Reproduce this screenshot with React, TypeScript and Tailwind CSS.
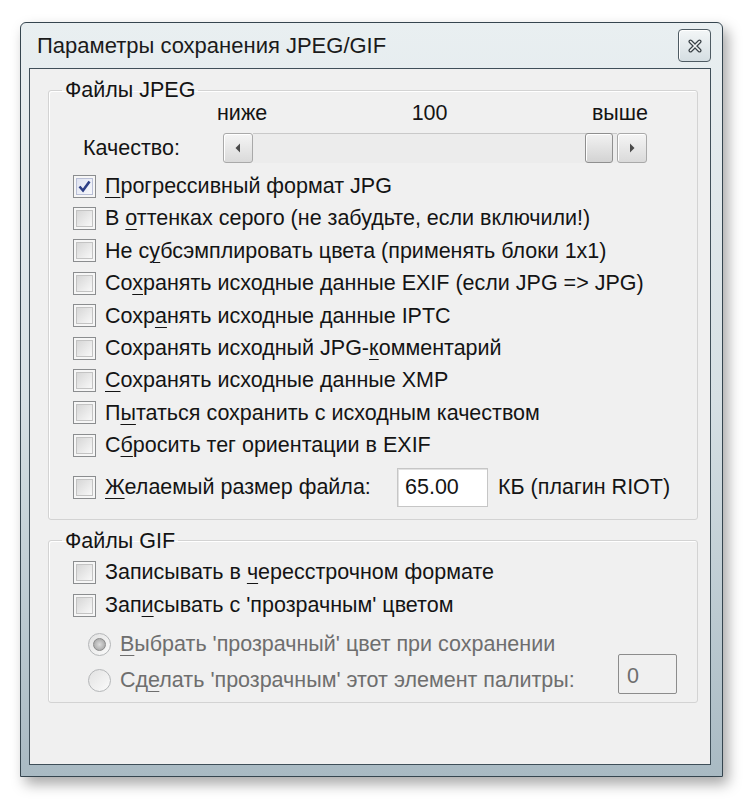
import type { ReactNode } from "react";

const sans = "font-['Liberation_Sans',Arial,sans-serif]";

// "&" marks the accelerator letter, like a Windows resource string
function Accel({ text }: { text: string }) {
  const i = text.indexOf("&");
  if (i < 0) return <>{text}</>;
  return (
    <>
      {text.slice(0, i)}
      <span className="underline decoration-1 underline-offset-[4px]">{text[i + 1]}</span>
      {text.slice(i + 2)}
    </>
  );
}

function CheckBox({ checked }: { checked?: boolean }) {
  return (
    <span className="flex h-[23px] w-[23px] shrink-0 items-center justify-center border border-[#8b8d8f] bg-[#f6f6f6]">
      {checked ? (
        <span className="flex h-[17px] w-[17px] items-center justify-center border border-[#b9bfd6] bg-linear-to-br from-[#dfe3f1] to-[#f7f8fc]">
          <svg width="15" height="15" viewBox="0 0 15 15">
            <path d="M2.5 7.5 L6 11.5 L12.5 2.5" fill="none" stroke="#2d3f86" strokeWidth="2.6" />
          </svg>
        </span>
      ) : (
        <span className="h-[17px] w-[17px] border border-[#c3c3c3] bg-linear-to-br from-[#d7d7d7] to-[#f8f8f8]" />
      )}
    </span>
  );
}

function Radio({ selected }: { selected?: boolean }) {
  return (
    <span className="flex h-[23px] w-[23px] shrink-0 items-center justify-center rounded-full border border-[#b4b6b8] bg-linear-to-br from-[#e2e2e2] to-[#fbfbfb]">
      {selected ? (
        <span className="h-[13px] w-[13px] rounded-full border border-[#8a8a8a] bg-radial from-[#dcdcdc] to-[#9c9c9c]" />
      ) : null}
    </span>
  );
}

function Option({ label, checked }: { label: string; checked?: boolean }) {
  return (
    <div className="flex h-[32.4px] items-center gap-[9px]">
      <CheckBox checked={checked} />
      <span className="whitespace-nowrap">
        <Accel text={label} />
      </span>
    </div>
  );
}

function GroupBox({ title, children }: { title: string; children: ReactNode }) {
  return (
    <fieldset className="ml-[18px] w-[650px] rounded-[3px] border border-[#d3d3d3] shadow-[inset_1px_1px_0_#ffffff]">
      <legend className="ml-[13px] px-[3px] leading-[24px]">{title}</legend>
      {children}
    </fieldset>
  );
}

function ScrollButton({ dir }: { dir: "left" | "right" }) {
  return (
    <span className="flex h-[30px] w-[30px] shrink-0 items-center justify-center rounded-[3px] border border-[#a9a9a9] bg-linear-to-b from-[#f5f5f5] to-[#dadada] shadow-[inset_1px_1px_0_#ffffff]">
      <svg width="8" height="12" viewBox="0 0 8 12">
        {dir === "left" ? (
          <path d="M6 1.5 L1.5 6 L6 10.5 Z" fill="#4a4a4a" />
        ) : (
          <path d="M2 1.5 L6.5 6 L2 10.5 Z" fill="#4a4a4a" />
        )}
      </svg>
    </span>
  );
}

const jpegOptions = [
  { label: "&Прогрессивный формат JPG", checked: true },
  { label: "В &оттенках серого (не забудьте, если включили!)" },
  { label: "Не с&убсэмплировать цвета (применять блоки 1x1)" },
  { label: "Со&хранять исходные данные EXIF (если JPG => JPG)" },
  { label: "Сохр&анять исходные данные IPTC" },
  { label: "Сохранять исходный JPG-&комментарий" },
  { label: "&Сохранять исходные данные XMP" },
  { label: "П&ытаться сохранить с исходным качеством" },
  { label: "С&бросить тег ориентации в EXIF" },
];

export default function App() {
  return (
    <div className={`h-[800px] w-[746px] overflow-hidden bg-white pl-[20px] pt-[22px] text-[21.5px] text-[#141414] ${sans}`}>
      <div className="flex h-[755px] w-[703px] flex-col rounded-t-[6px] border border-[#35454f] bg-linear-to-b from-[#e9eff1] via-[#d6e0e4] to-[#a9bac3] shadow-[5px_7px_14px_rgba(0,0,0,0.35)]">
        <div className="flex h-[45px] items-center justify-between pl-[16px] pr-[11px]">
          <span className="text-[22px] text-[#1b1b1b]">Параметры сохранения JPEG/GIF</span>
          <span className="flex h-[33px] w-[33px] items-center justify-center rounded-[4px] border border-[#4e5b63] bg-linear-to-b from-[#f3f6f7] to-[#d5dee2] shadow-[inset_1px_1px_0_#ffffff]">
            <svg width="14" height="14" viewBox="0 0 14 14">
              <path d="M2.5 2.5 L11.5 11.5 M11.5 2.5 L2.5 11.5" stroke="#3a4247" strokeWidth="4" strokeLinecap="round" />
              <path d="M2.5 2.5 L11.5 11.5 M11.5 2.5 L2.5 11.5" stroke="#f2f4f5" strokeWidth="1.6" strokeLinecap="round" />
            </svg>
          </span>
        </div>

        <div className="flex flex-1 pb-[11px] pl-[8px] pr-[11px]">
          <div className="flex-1 border border-[#3f4f59] bg-[#f0f0f0] pt-[9px]">
            <GroupBox title="Файлы JPEG">
              <div className="ml-[168px] flex h-[22px] w-[431px] items-center justify-between">
                <span>ниже</span>
                <span>100</span>
                <span>выше</span>
              </div>

              <div className="mt-[9px] flex h-[30px] items-center pl-[34px]">
                <span className="w-[140px]">Качество:</span>
                <div className="flex w-[424px]">
                  <ScrollButton dir="left" />
                  <div className="flex flex-1 justify-end border-t border-[#c9c9c9] bg-[#ececec] pr-[4px]">
                    <span className="-mt-px h-[30px] w-[28px] rounded-[3px] border border-[#8f8f8f] bg-linear-to-b from-[#f2f2f2] to-[#d3d3d3] shadow-[inset_1px_1px_0_#ffffff]" />
                  </div>
                  <ScrollButton dir="right" />
                </div>
              </div>

              <div className="mt-[7px] pl-[24px]">
                {jpegOptions.map((o) => (
                  <Option key={o.label} label={o.label} checked={o.checked} />
                ))}
                <div className="mt-[6px] flex h-[39px] items-center">
                  <CheckBox />
                  <span className="ml-[9px] w-[292px] whitespace-nowrap">
                    <Accel text="&Желаемый размер файла:" />
                  </span>
                  <span className="flex h-[39px] w-[91px] items-center border border-[#c6c6c6] bg-white pl-[7px] shadow-[inset_1px_1px_0_#e2e2e2]">
                    65.00
                  </span>
                  <span className="ml-[10px] whitespace-nowrap">КБ (плагин RIOT)</span>
                </div>
              </div>
              <div className="h-[12px]" />
            </GroupBox>

            <div className="h-[9px]" />

            <GroupBox title="Файлы GIF">
              <div className="mt-[3px] pl-[24px]">
                <div className="flex h-[33px] items-center gap-[9px]">
                  <CheckBox />
                  <span><Accel text="Записывать в &чересстрочном формате" /></span>
                </div>
                <div className="flex h-[33px] items-center gap-[9px]">
                  <CheckBox />
                  <span><Accel text="Зап&исывать с 'прозрачным' цветом" /></span>
                </div>
              </div>

              <div className="mt-[5px] pl-[39px] text-[#6e6e6e]">
                <div className="flex h-[36px] items-center gap-[9px]">
                  <Radio selected />
                  <span><Accel text="&Выбрать 'прозрачный' цвет при сохранении" /></span>
                </div>
                <div className="flex items-start">
                  <div className="flex h-[36px] items-center gap-[9px]">
                    <Radio />
                    <span className="whitespace-nowrap"><Accel text="Сд&елать 'прозрачным' этот элемент палитры:" /></span>
                  </div>
                  <span className="-mt-[9px] mr-[20px] ml-auto flex h-[40px] w-[59px] items-start rounded-[2px] border border-[#8c8c8c] pl-[8px] pt-[5px] text-[#6e6e6e]">
                    0
                  </span>
                </div>
              </div>
              <div className="h-[3px]" />
            </GroupBox>
          </div>
        </div>
      </div>
    </div>
  );
}
